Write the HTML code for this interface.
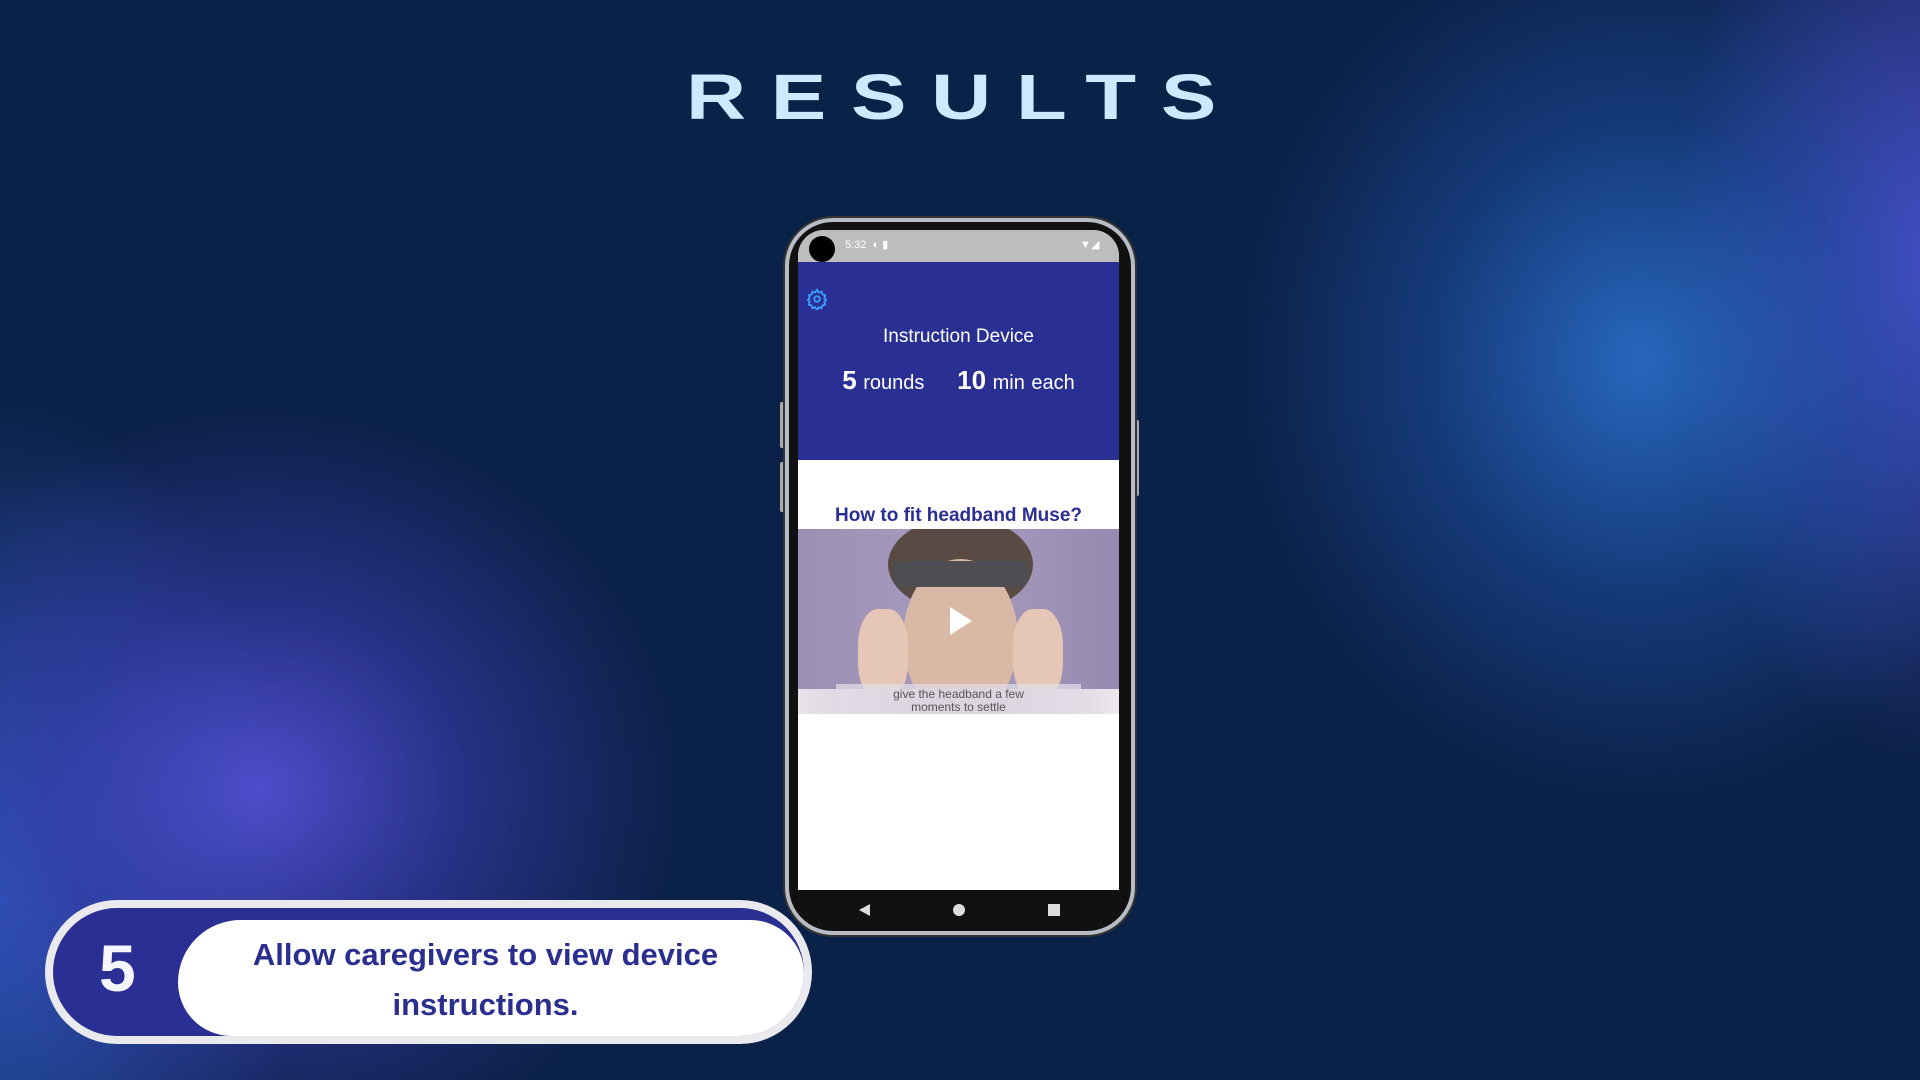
<!DOCTYPE html>
<html><head><meta charset="utf-8"><style>
*{margin:0;padding:0;box-sizing:border-box}
body{width:1920px;height:1080px;overflow:hidden;position:relative;font-family:"Liberation Sans",sans-serif;
background:
radial-gradient(ellipse 400px 440px at 1640px 360px, rgba(45,115,210,0.85), rgba(35,90,190,0.4) 55%, rgba(11,34,71,0) 100%),
radial-gradient(ellipse 260px 500px at 1930px 260px, rgba(80,80,210,0.9), rgba(11,34,71,0) 100%),
radial-gradient(ellipse 420px 380px at 260px 790px, rgba(80,80,210,0.95), rgba(60,60,180,0.55) 50%, rgba(11,34,71,0) 100%),
radial-gradient(ellipse 300px 500px at 0px 900px, rgba(50,100,210,0.8), rgba(11,34,71,0) 100%),
#0b2248;}
.title{position:absolute;top:62px;left:686px;width:539px;height:70px}
.title span{display:inline-block;font-size:64px;font-weight:bold;color:#cde8ff;letter-spacing:19px;transform:scaleX(1.3);transform-origin:0 0;line-height:70px;white-space:nowrap}
.phone{position:absolute;left:785px;top:218px;width:350px;height:717px;border-radius:48px;background:#111;border:4px solid #b8bcc4;box-shadow:0 0 0 2px #333}
.btn{position:absolute;background:#aaa;width:5px;border-radius:2px}
.screen{position:absolute;left:798px;top:230px;width:321px;height:660px;background:#fff;border-radius:26px 26px 0 0;overflow:hidden}
.status{height:32px;background:#bdbdbd;position:relative}
.cam{position:absolute;left:11px;top:6px;width:26px;height:26px;border-radius:50%;background:#000}
.status span{position:absolute;left:47px;top:8px;font-size:11px;color:#fff}
.header{height:198px;background:#2a2f93;position:relative;color:#fff;text-align:center}
.gear{position:absolute;left:8px;top:26px}
.h1{position:absolute;top:64px;width:100%;font-size:19px}
.h2{position:absolute;top:103px;width:100%;font-size:20px;word-spacing:1px}
.h2 b{font-size:26px}
.q{position:absolute;top:275px;width:100%;text-align:center;color:#2a2f93;font-weight:bold;font-size:19px}
.video{position:absolute;top:299px;left:0;width:321px;height:185px;background:linear-gradient(90deg,#9b90b3,#a79cbf 50%,#958ab0);overflow:hidden}
.nav{position:absolute;left:798px;top:890px;width:321px;height:40px}
.banner{position:absolute;left:45px;top:900px;width:767px;height:144px;border-radius:72px;background:#e9e9ee;}
.inner{position:absolute;left:8px;top:8px;width:751px;height:128px;border-radius:64px;background:#2a2f93;overflow:hidden}
.white{position:absolute;left:125px;top:12px;width:626px;height:116px;border-radius:70px 60px 0 60px;background:#fff}
.num{position:absolute;left:46px;top:22px;font-size:66px;font-weight:bold;color:#f4f5ff}
.txt{position:absolute;left:130px;top:22px;width:605px;text-align:center;color:#2a2f8f;font-weight:bold;font-size:31px;line-height:50px}
</style></head><body>
<div class="title"><span>RESULTS</span></div>
<div class="btn" style="left:780px;top:402px;height:46px"></div>
<div class="btn" style="left:780px;top:462px;height:50px"></div>
<div class="btn" style="left:1134px;top:420px;height:76px"></div>
<div class="phone"></div>
<div class="screen">
 <div class="status"><div class="cam"></div><span>5:32 &nbsp;◐ ▮</span><span style="left:282px">▼◢</span></div>
 <div class="header">
  <svg class="gear" width="22" height="22" viewBox="0 0 24 24" fill="none" stroke="#3aa0ff" stroke-width="2"><circle cx="12" cy="12" r="3"/><path d="M12 2l2 3 3-1 1 3 3 1-1 3 2 2-2 2 1 3-3 1-1 3-3-1-2 3-2-3-3 1-1-3-3-1 1-3-2-2 2-2-1-3 3-1 1-3 3 1z"/></svg>
  <div class="h1">Instruction Device</div>
  <div class="h2"><b>5</b> rounds &nbsp;&nbsp;&nbsp;&nbsp;<b>10</b> min each</div>
 </div>
 <div class="q">How to fit headband Muse?</div>
 <div class="video">
  <div style="position:absolute;left:90px;top:-12px;width:145px;height:95px;border-radius:50%;background:#5a4a44"></div>
  <div style="position:absolute;left:105px;top:30px;width:115px;height:160px;border-radius:50%;background:#d9b8a6"></div>
  <div style="position:absolute;left:95px;top:32px;width:135px;height:26px;border-radius:8px;background:#4d4d52"></div>
  <div style="position:absolute;left:60px;top:80px;width:50px;height:90px;border-radius:40%;background:#e6c7b6"></div>
  <div style="position:absolute;left:215px;top:80px;width:50px;height:90px;border-radius:40%;background:#e6c7b6"></div>
  <div style="position:absolute;left:0;top:160px;width:321px;height:25px;background:linear-gradient(90deg,#e8e4ea,#c9bfcf 40%,#c9bfcf 60%,#ece8ee)"></div>
  <div style="position:absolute;left:38px;top:155px;width:245px;height:30px;background:rgba(225,220,230,0.75);text-align:center;font-size:12px;color:#555;line-height:13px;padding-top:4px">give the headband a few<br>moments to settle</div>
  <div style="position:absolute;left:152px;top:78px;width:0;height:0;border-left:22px solid #fff;border-top:14px solid transparent;border-bottom:14px solid transparent"></div>
 </div>
</div>
<div class="nav">
 <div style="position:absolute;left:61px;top:14px;width:0;height:0;border-right:11px solid #ddd;border-top:6px solid transparent;border-bottom:6px solid transparent"></div>
 <div style="position:absolute;left:155px;top:14px;width:12px;height:12px;border-radius:50%;background:#ddd"></div>
 <div style="position:absolute;left:250px;top:14px;width:12px;height:12px;background:#ddd"></div>
</div>
<div class="banner"><div class="inner"><div class="white"></div><div class="num">5</div><div class="txt">Allow caregivers to view device<br>instructions.</div></div></div>
</body></html>
